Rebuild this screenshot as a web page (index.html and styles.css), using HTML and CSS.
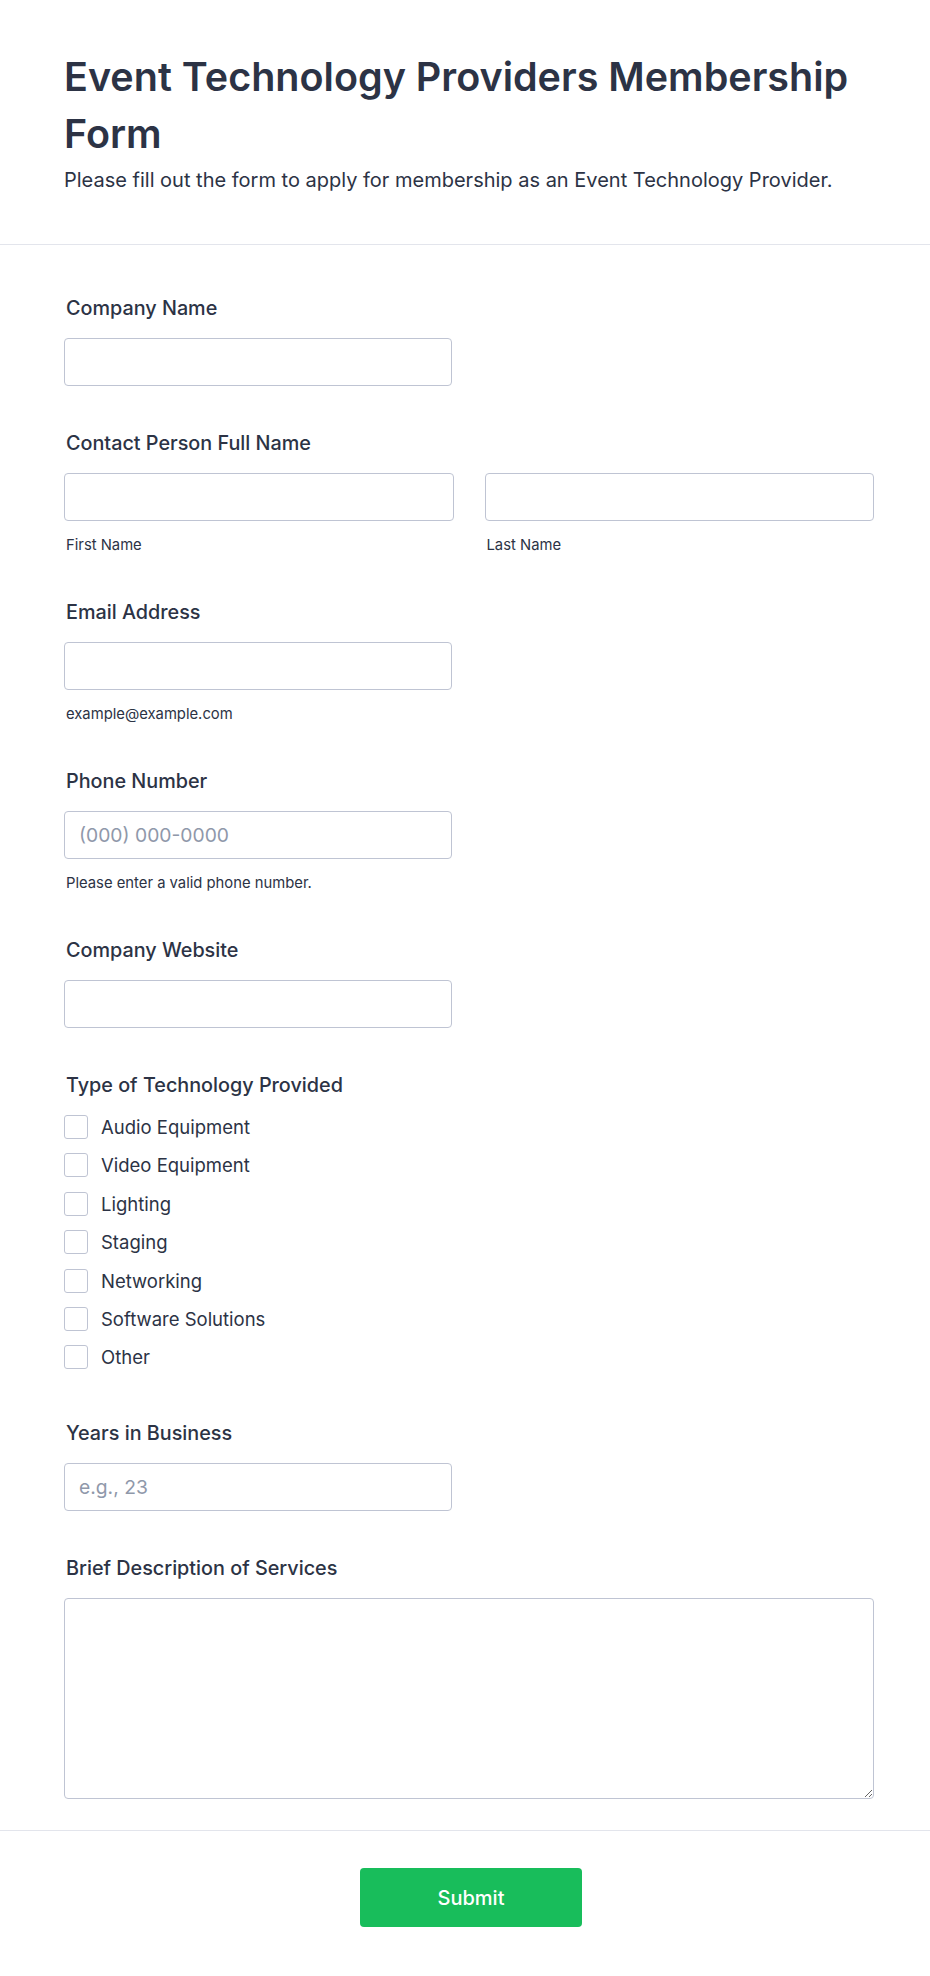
FILE: index.html
```html
<!DOCTYPE html>
<html lang="en">
<head>
<meta charset="utf-8">
<title>Event Technology Providers Membership Form</title>
<link rel="stylesheet" href="styles.css">
</head>
<body>
<div class="page">
  <header class="form-header">
    <h1 class="form-title">Event Technology Providers Membership Form</h1>
    <p class="form-subtitle">Please fill out the form to apply for membership as an Event Technology Provider.</p>
  </header>

  <form class="form-body">
    <div class="field">
      <label class="field-label">Company Name</label>
      <input class="text-input half" type="text">
    </div>

    <div class="field">
      <label class="field-label">Contact Person Full Name</label>
      <div class="name-row">
        <div class="name-col">
          <input class="text-input" type="text">
          <span class="sub-label">First Name</span>
        </div>
        <div class="name-col">
          <input class="text-input" type="text">
          <span class="sub-label">Last Name</span>
        </div>
      </div>
    </div>

    <div class="field">
      <label class="field-label">Email Address</label>
      <input class="text-input half" type="email">
      <span class="sub-label">example@example.com</span>
    </div>

    <div class="field">
      <label class="field-label">Phone Number</label>
      <input class="text-input half" type="tel" placeholder="(000) 000-0000">
      <span class="sub-label">Please enter a valid phone number.</span>
    </div>

    <div class="field">
      <label class="field-label">Company Website</label>
      <input class="text-input half" type="text">
    </div>

    <div class="field">
      <label class="field-label">Type of Technology Provided</label>
      <div class="options">
        <label class="option"><input class="check" type="checkbox"><span>Audio Equipment</span></label>
        <label class="option"><input class="check" type="checkbox"><span>Video Equipment</span></label>
        <label class="option"><input class="check" type="checkbox"><span>Lighting</span></label>
        <label class="option"><input class="check" type="checkbox"><span>Staging</span></label>
        <label class="option"><input class="check" type="checkbox"><span>Networking</span></label>
        <label class="option"><input class="check" type="checkbox"><span>Software Solutions</span></label>
        <label class="option"><input class="check" type="checkbox"><span>Other</span></label>
      </div>
    </div>

    <div class="field">
      <label class="field-label">Years in Business</label>
      <input class="text-input half" type="text" placeholder="e.g., 23">
    </div>

    <div class="field">
      <label class="field-label">Brief Description of Services</label>
      <textarea class="text-area"></textarea>
    </div>
  </form>

  <footer class="form-footer">
    <button class="submit-btn" type="button">Submit</button>
  </footer>
</div>
</body>
</html>
```
FILE: styles.css
```css
* { box-sizing: border-box; }

html, body {
  margin: 0;
  padding: 0;
  background: #ffffff;
}

body {
  font-family: Inter, "Noto Sans", "Liberation Sans", sans-serif;
  color: #2c3345;
}

.page {
  width: 930px;
}

.form-header {
  padding: 49px 56px 50px 64px;
  border-bottom: 1px solid #e3e5ec;
}

.form-title {
  margin: 0;
  font-size: 39.5px;
  line-height: 57px;
  font-weight: 600;
  color: #2c3345;
}

.form-subtitle {
  margin: 4px 0 0;
  font-size: 20px;
  line-height: 27px;
  font-weight: 400;
  color: #2c3345;
}

.form-body {
  display: flex;
  flex-direction: column;
  gap: 43px;
  padding: 49px 56px 31px 64px;
  border-bottom: 1px solid #e3e5ec;
}

.field {
  display: flex;
  flex-direction: column;
  align-items: flex-start;
}

.field-label {
  display: block;
  padding-left: 2px;
  margin-bottom: 16px;
  font-size: 19.8px;
  line-height: 28px;
  font-weight: 500;
  color: #2c3345;
}

.text-input {
  display: block;
  width: 100%;
  height: 48px;
  padding: 0 14px;
  border: 1px solid #bfc4d3;
  border-radius: 4px;
  background: #fff;
  font-family: inherit;
  font-size: 19.3px;
  color: #2c3345;
  outline: none;
}

.text-input.half {
  width: 388px;
}

.text-input::placeholder {
  color: #8f98aa;
}

.sub-label {
  display: block;
  margin-top: 14px;
  padding-left: 2px;
  font-size: 14.8px;
  line-height: 20px;
  color: #2c3345;
}

.name-row {
  display: flex;
  gap: 31px;
  width: 100%;
}

.name-col {
  flex: 1;
  display: flex;
  flex-direction: column;
}

.options {
  display: flex;
  flex-direction: column;
  gap: 14.4px;
  margin-top: 0;
  margin-bottom: 7px;
}

.option {
  display: flex;
  align-items: center;
  gap: 13px;
  height: 24px;
  font-size: 18.5px;
  line-height: 24px;
  color: #2c3345;
}

.check {
  appearance: none;
  -webkit-appearance: none;
  margin: 0;
  width: 24px;
  height: 24px;
  border: 1px solid #bfc4d3;
  border-radius: 3px;
  background: #fff;
  flex: none;
}

.text-area {
  display: block;
  width: 100%;
  height: 201px;
  padding: 12px 14px;
  border: 1px solid #bfc4d3;
  border-radius: 4px;
  background: #fff;
  font-family: inherit;
  font-size: 18px;
  color: #2c3345;
  outline: none;
}

.form-footer {
  display: flex;
  justify-content: center;
  padding: 37px 56px 50px 68px;
}

.submit-btn {
  width: 222px;
  height: 59px;
  border: none;
  border-radius: 4px;
  background: #18bd5b;
  color: #ffffff;
  font-family: inherit;
  font-size: 20px;
  font-weight: 500;
  cursor: pointer;
}
```
